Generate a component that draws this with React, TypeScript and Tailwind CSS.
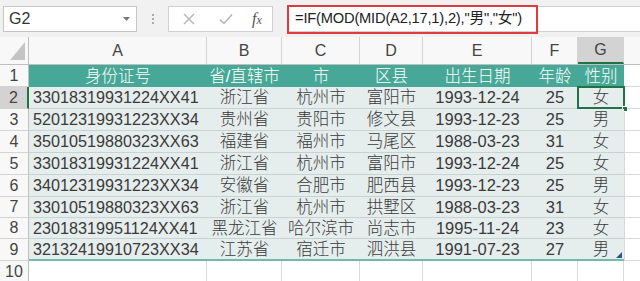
import React from 'react';

const font = { fontFamily: '"Liberation Sans", "Noto Sans CJK SC", sans-serif' };

type Row = [string, string, string, string, string, string, string];

const rows: Row[] = [
  ['33018319931224XX41', '浙江省', '杭州市', '富阳市', '1993-12-24', '25', '女'],
  ['52012319931223XX34', '贵州省', '贵阳市', '修文县', '1993-12-23', '25', '男'],
  ['35010519880323XX63', '福建省', '福州市', '马尾区', '1988-03-23', '31', '女'],
  ['33018319931224XX41', '浙江省', '杭州市', '富阳市', '1993-12-24', '25', '女'],
  ['34012319931223XX34', '安徽省', '合肥市', '肥西县', '1993-12-23', '25', '男'],
  ['33010519880323XX63', '浙江省', '杭州市', '拱墅区', '1988-03-23', '31', '女'],
  ['23018319951124XX41', '黑龙江省', '哈尔滨市', '尚志市', '1995-11-24', '23', '女'],
  ['32132419910723XX34', '江苏省', '宿迁市', '泗洪县', '1991-07-23', '27', '男'],
];

const heads = ['身份证号', '省/直辖市', '市', '区县', '出生日期', '年龄', '性别'];
const letters = ['A', 'B', 'C', 'D', 'E', 'F', 'G'];
const widths = ['w-[178px]', 'w-[75px]', 'w-[78px]', 'w-[63px]', 'w-[109px]', 'w-[46px]', 'w-[46px]'];
const rowH = ['h-[22px]', 'h-[22px]', 'h-[22px]', 'h-[22px]', 'h-[22px]', 'h-[22px]', 'h-[21px]', 'h-[21px]', 'h-[22px]'];

function RowHead({ n, h, selected }: { n: number; h: string; selected?: boolean }) {
  return (
    <div
      className={`w-[29px] ${h} shrink-0 flex items-center justify-center text-[16px] leading-none text-[#444] border-b border-[#d4d4d4] ${
        selected ? 'bg-[#d3d3d3] border-r-2 border-r-[#217346]' : 'bg-[#f8f8f8] border-r border-r-[#bfbfbf]'
      }`}
    >
      {n}
    </div>
  );
}

export default function App() {
  return (
    <div className="w-[640px] h-[281px] overflow-hidden bg-white" style={font}>
      {/* formula bar */}
      <div className="h-[37px] bg-[#f1f1f1] flex items-center pl-[3px]">
        <div className="w-[134px] h-[26px] bg-white border border-[#c6c6c6] flex items-center justify-between pl-[5px] pr-[6px]">
          <span className="text-[16px] text-[#333]">G2</span>
          <svg width="7" height="4" viewBox="0 0 7 4">
            <path d="M0 0h7L3.5 4z" fill="#777" />
          </svg>
        </div>
        <div className="w-[31px] flex flex-col items-center gap-[2px]">
          <span className="w-[2px] h-[2px] bg-[#aaa]" />
          <span className="w-[2px] h-[2px] bg-[#aaa]" />
          <span className="w-[2px] h-[2px] bg-[#aaa]" />
        </div>
        <div className="w-[105px] h-[26px] bg-white border border-[#d0d0d0] flex items-center">
          <svg className="ml-[14px]" width="12" height="12" viewBox="0 0 12 12">
            <path d="M1 1l10 10M11 1L1 11" stroke="#b5b5b5" strokeWidth="1.4" />
          </svg>
          <svg className="ml-[24px]" width="14" height="12" viewBox="0 0 14 12">
            <path d="M1 6.5l4 4L13 1.5" stroke="#b5b5b5" strokeWidth="1.5" fill="none" />
          </svg>
          <span className="ml-[19px] text-[16px] italic text-[#555]" style={{ fontFamily: '"Liberation Serif", serif' }}>
            f<span className="text-[12px]">x</span>
          </span>
        </div>
        <div className="ml-[14px] flex-1 h-[26px] bg-white border-y border-[#d0d0d0] flex items-center relative">
          <div className="absolute left-0 top-[-2px] w-[251px] h-[29px] border-2 border-[#e03a3e]" />
          <span className="pl-[8px] text-[14.7px] tracking-[-0.2px] text-[#222]">=IF(MOD(MID(A2,17,1),2),"男","女")</span>
        </div>
      </div>

      {/* column headers */}
      <div className="h-[28px] flex border-b border-[#bfbfbf] bg-[#f8f8f8]">
        <div className="w-[29px] shrink-0 border-r border-[#bfbfbf] flex items-end justify-end pr-[3px] pb-[4px]">
          <svg width="15" height="18" viewBox="0 0 15 18">
            <path d="M15 0v18H0z" fill="#c4c4c4" />
          </svg>
        </div>
        {letters.map((l, i) => (
          <div
            key={l}
            className={`${widths[i]} shrink-0 flex items-center justify-center text-[16px] text-[#444] border-r border-[#d4d4d4] ${
              l === 'G' ? 'bg-[#d3d3d3] border-b-2 border-b-[#217346]' : ''
            }`}
          >
            {l}
          </div>
        ))}
        <div className="flex-1" />
      </div>

      {/* row 1 header */}
      <div className="flex">
        <RowHead n={1} h="h-[22px]" />
        {heads.map((t, i) => (
          <div
            key={t}
            className={`${widths[i]} h-[22px] shrink-0 bg-[#48a898] text-white text-[16.5px] font-light leading-none flex items-center justify-center`}
          >
            {t}
          </div>
        ))}
        <div className="flex-1 border-b border-[#d9d9d9]" />
      </div>

      {rows.map((r, ri) => (
        <div key={ri} className="flex">
          <RowHead n={ri + 2} h={rowH[ri + 1]} selected={ri === 0} />
          {r.map((c, ci) => {
            const sel = ri === 0 && ci === 6;
            const last = ri === rows.length - 1;
            return (
              <div
                key={ci}
                className={`${widths[ci]} ${rowH[ri + 1]} shrink-0 bg-[#e6eded] font-light leading-none text-[#3a3a3a] flex items-center relative whitespace-nowrap ${
                  ci === 0 ? 'pl-[4px] text-[16.2px]' : 'justify-center text-[16.5px]'
                } ${last ? 'border-b-2 border-[#6fbcae]' : 'border-b border-[#c8d2d1]'}`}
              >
                {c}
                {sel && (
                  <>
                    <div className="absolute inset-[-1px] border-2 border-[#217346]" />
                    <div className="absolute right-[-4px] bottom-[-4px] w-[6px] h-[6px] bg-[#217346] border border-white" />
                  </>
                )}
                {last && ci === 6 && (
                  <svg className="absolute right-[2px] bottom-[1px]" width="6" height="6" viewBox="0 0 6 6">
                    <path d="M6 0v6H0z" fill="#2f5597" />
                  </svg>
                )}
              </div>
            );
          })}
          <div className="flex-1 border-b border-[#d9d9d9] border-l border-l-[#d9d9d9]" />
        </div>
      ))}

      {/* row 10 */}
      <div className="flex h-[22px]">
        <RowHead n={10} h="h-[22px]" />
        {widths.map((w, i) => (
          <div key={i} className={`${w} h-[22px] shrink-0 border-r border-b border-[#d9d9d9]`} />
        ))}
        <div className="flex-1 border-b border-[#d9d9d9]" />
      </div>
    </div>
  );
}
